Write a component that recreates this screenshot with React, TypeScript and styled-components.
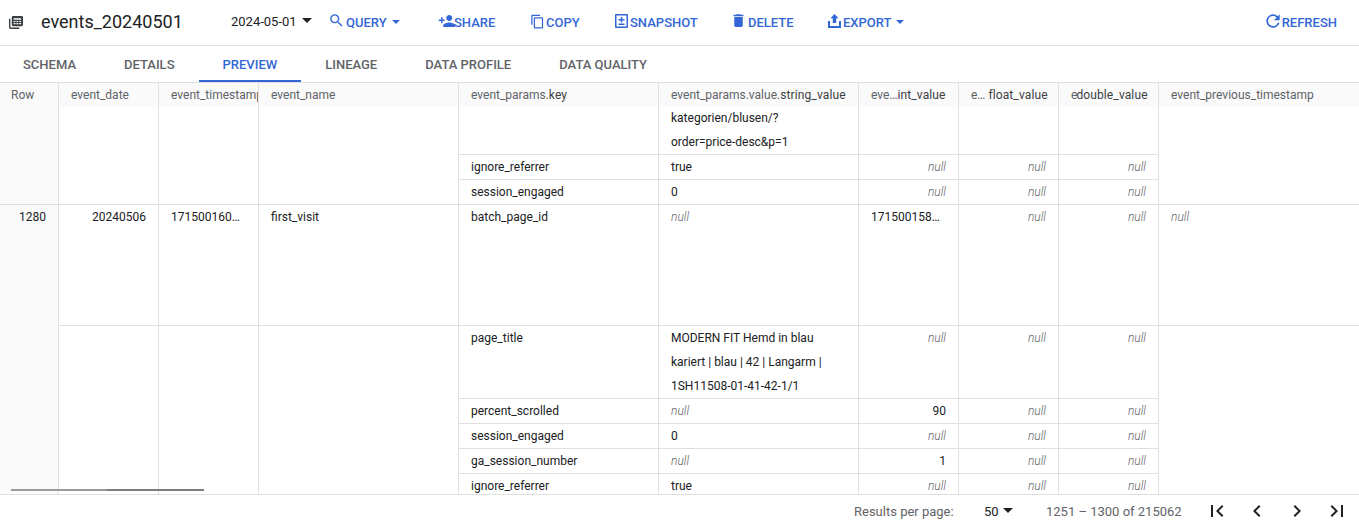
import React from 'react';
import styled, { createGlobalStyle } from 'styled-components';
import {
   MdChevronLeft,
   MdChevronRight,
   MdContentCopy,
   MdDelete,
   MdFirstPage,
   MdLastPage,
   MdPersonAdd,
   MdRefresh,
   MdSearch,
} from 'react-icons/md';

const GlobalStyle = createGlobalStyle`
   html, body {
      margin: 0;
      height: 100%;
      overflow: hidden;
      background: #fff;
      font-family: Roboto, "Liberation Sans", sans-serif;
   }
`;

const Root = styled.div`
   display: flex;
   flex-direction: column;
   width: 1359px;
   height: 525px;
   overflow: hidden;
`;

const Toolbar = styled.div`
   display: flex;
   align-items: center;
   flex: 0 0 46px;
   box-sizing: border-box;
   height: 46px;
   padding: 0 22px 2px 9px;
   border-bottom: 1px solid #e0e0e0;
`;

const Title = styled.div`
   font-size: 18px;
   color: #202124;
   margin: -1px 0 0 18px;
   width: 190px;
`;

const DatePicker = styled.div`
   display: flex;
   align-items: center;
   gap: 5px;
   font-size: 13px;
   color: #202124;
   width: 99px;
`;

const ToolButton = styled.div<{ $width?: number; $gap?: number }>`
   display: flex;
   align-items: center;
   gap: ${p => p.$gap ?? 2}px;
   width: ${p => (p.$width ? `${p.$width}px` : 'auto')};
   margin-top: 2px;
   font-size: 13px;
   font-weight: 500;
   color: #3367d6;
   white-space: nowrap;
   svg {
      flex: none;
   }
`;

const ButtonLabel = styled.span`
   display: inline-flex;
   align-items: center;
   gap: 5px;
`;

const Spacer = styled.div`
   flex: 1;
`;

const CaretDown = styled.span<{ $dark?: boolean }>`
   display: inline-block;
   width: 0;
   height: 0;
   margin-top: -2px;
   border-left: ${p => (p.$dark ? 5 : 4.5)}px solid transparent;
   border-right: ${p => (p.$dark ? 5 : 4.5)}px solid transparent;
   border-top: ${p => (p.$dark ? 5 : 4)}px solid ${p => (p.$dark ? '#202124' : '#3367d6')};
`;

const Tabs = styled.div`
   display: flex;
   flex: 0 0 36px;
   height: 36px;
   margin-left: -1px;
`;

const Tab = styled.div<{ $active?: boolean }>`
   display: flex;
   align-items: center;
   justify-content: center;
   box-sizing: border-box;
   height: 36px;
   padding: 2px 24px 0;
   font-size: 13px;
   font-weight: 500;
   color: ${p => (p.$active ? '#3367d6' : '#5f6368')};
   border-bottom: 2px solid ${p => (p.$active ? '#3367d6' : 'transparent')};
   white-space: nowrap;
`;

const TableArea = styled.div`
   position: relative;
   flex: 0 0 413px;
   height: 413px;
   overflow: hidden;
   box-sizing: border-box;
   border-top: 1px solid #e0e0e0;
   border-bottom: 1px solid #e0e0e0;
`;

const Grid = styled.table`
   table-layout: fixed;
   width: 1359px;
   border-collapse: separate;
   border-spacing: 0;
   font-size: 12px;
   color: #202124;
`;

const HeadCell = styled.th<{ $clip?: boolean; $last?: boolean }>`
   box-sizing: border-box;
   height: 24px;
   padding: 0 ${p => (p.$clip ? 0 : 12)}px 0 12px;
   background: #fafafa;
   border-right: ${p => (p.$last ? 'none' : '1px solid #e0e0e0')};
   font-weight: 400;
   text-align: left;
   color: #5f6368;
   white-space: nowrap;
   overflow: hidden;
   text-overflow: clip;
   b {
      font-weight: 400;
      color: #3c4043;
      letter-spacing: 0.12px;
   }
`;

const RowHeadCell = styled(HeadCell)`
   padding-left: 11px;
`;

const RowNumber = styled.td`
   box-sizing: border-box;
   padding: 0 12px;
   background: #fafafa;
   border-right: 1px solid #e0e0e0;
   border-bottom: 1px solid #e0e0e0;
   text-align: right;
   vertical-align: top;
   line-height: 24px;
`;

const Cell = styled.td<{ $right?: boolean; $wrap?: boolean; $last?: boolean }>`
   box-sizing: border-box;
   padding: 0 12px;
   border-right: ${p => (p.$last ? 'none' : '1px solid #e0e0e0')};
   border-bottom: 1px solid #e0e0e0;
   line-height: 24px;
   vertical-align: top;
   text-align: ${p => (p.$right ? 'right' : 'left')};
   white-space: ${p => (p.$wrap ? 'normal' : 'nowrap')};
   overflow: hidden;
   text-overflow: ellipsis;
`;

const ScrolledText = styled.div`
   margin-top: -1px;
`;

const Null = styled.span`
   font-style: italic;
   font-weight: 300;
   color: #5f6368;
`;

const ScrollThumb = styled.div`
   position: absolute;
   left: 11px;
   bottom: 3px;
   width: 193px;
   height: 2px;
   background: linear-gradient(to right, #999 0, #999 50%, #7f7f7a 50%, #7f7f7a 100%);
`;

const Footer = styled.div`
   display: flex;
   align-items: center;
   flex: 1;
   padding: 2px 0 0 854px;
   font-size: 13px;
   color: #5f6368;
`;

const FooterLabel = styled.div`
   flex: 0 0 130px;
`;

const PageSize = styled.div`
   display: flex;
   align-items: center;
   gap: 4px;
   flex: 0 0 62px;
   color: #202124;
`;

const RangeText = styled.div`
   flex: 0 0 151px;
`;

const PagerButton = styled.div`
   display: flex;
   align-items: center;
   justify-content: center;
   flex: 0 0 40px;
   color: #202124;
`;

const TableIcon = () => (
   <svg width="14" height="14" viewBox="0 0 15 15" fill="#3c4043">
      <path d="M0 4h1.5v9.5H11V15H1.5A1.5 1.5 0 0 1 0 13.5z" />
      <path
         fillRule="evenodd"
         d="M4.500 1H13.500A1.500 1.500 0 0 1 15 2.500V10.500A1.500 1.500 0 0 1 13.500 12H4.500A1.500 1.500 0 0 1 3 10.500V2.500A1.500 1.500 0 0 1 4.500 1zM5 3.500V5H13V3.500zM5 6.300V7.500H7V6.300zM8 6.300V7.500H10V6.300zM11 6.300V7.500H13V6.300zM5 8.700V10H7V8.700zM8 8.700V10H10V8.700zM11 8.700V10H13V8.700z"
      />
   </svg>
);

const SnapshotIcon = () => (
   <svg width="13" height="14" viewBox="0 0 13 14" fill="#3367d6" style={{ marginTop: -3 }}>
      <path
         fillRule="evenodd"
         d="M1 0H12A1 1 0 0 1 13 1V13A1 1 0 0 1 12 14H1A1 1 0 0 1 0 13V1A1 1 0 0 1 1 0zM1.500 1.500V12.500H11.500V1.500zM5.750 3H7.250V5H9.500V6.500H7.250V8.500H5.750V6.500H3.500V5H5.750zM3.500 9.500H9.500V11H3.500z"
      />
   </svg>
);

const ExportIcon = () => (
   <svg width="13" height="14" viewBox="0 0 13 14" fill="#3367d6" style={{ marginTop: -3 }}>
      <path d="M6.500 0L10.500 4.200H8.200V9H4.800V4.200H2.500z" />
      <path d="M0 7H2V12H11V7H13V14H0z" />
   </svg>
);

const nullCell = (
   <Cell $right>
      <Null>null</Null>
   </Cell>
);

type ParamRow = {
   key: string;
   value?: React.ReactNode;
   int?: string;
};

const ValueCell = ({ value }: { value?: React.ReactNode }) => (
   <Cell $wrap>{value ?? <Null>null</Null>}</Cell>
);

const IntCell = ({ value }: { value?: string }) => (value ? <Cell $right>{value}</Cell> : nullCell);

const laterParams: ParamRow[] = [
   { key: 'percent_scrolled', int: '90' },
   { key: 'session_engaged', value: '0' },
   { key: 'ga_session_number', int: '1' },
   { key: 'ignore_referrer', value: 'true' },
];

export default function App() {
   return (
      <Root>
         <GlobalStyle />
         <Toolbar>
            <TableIcon />
            <Title>events_20240501</Title>
            <DatePicker>
               2024-05-01
               <CaretDown $dark />
            </DatePicker>
            <ToolButton $width={108}>
               <MdSearch size={17} style={{ margin: '-4px -1px 0 -2px' }} />
               <ButtonLabel>
                  QUERY
                  <CaretDown />
               </ButtonLabel>
            </ToolButton>
            <ToolButton $width={93} $gap={0}>
               <MdPersonAdd size={18} style={{ margin: '-3px -2px 0 0' }} />
               SHARE
            </ToolButton>
            <ToolButton $width={84} $gap={1}>
               <MdContentCopy size={15} style={{ margin: '-3px 0 0 -1px' }} />
               COPY
            </ToolButton>
            <ToolButton $width={117}>
               <SnapshotIcon />
               SNAPSHOT
            </ToolButton>
            <ToolButton $width={96} $gap={3}>
               <MdDelete size={17} style={{ margin: '-4px -2px 0' }} />
               DELETE
            </ToolButton>
            <ToolButton>
               <ExportIcon />
               <ButtonLabel>
                  EXPORT
                  <CaretDown />
               </ButtonLabel>
            </ToolButton>
            <Spacer />
            <ToolButton $gap={0}>
               <MdRefresh size={20} style={{ margin: '-4px -1px 0 0' }} />
               REFRESH
            </ToolButton>
         </Toolbar>
         <Tabs>
            <Tab>SCHEMA</Tab>
            <Tab>DETAILS</Tab>
            <Tab $active>PREVIEW</Tab>
            <Tab>LINEAGE</Tab>
            <Tab>DATA PROFILE</Tab>
            <Tab>DATA QUALITY</Tab>
         </Tabs>
         <TableArea>
            <Grid>
               <colgroup>
                  <col width={59} />
                  <col width={100} />
                  <col width={100} />
                  <col width={200} />
                  <col width={200} />
                  <col width={200} />
                  <col width={100} />
                  <col width={100} />
                  <col width={100} />
                  <col width={200} />
               </colgroup>
               <thead>
                  <tr>
                     <RowHeadCell>Row</RowHeadCell>
                     <HeadCell>event_date</HeadCell>
                     <HeadCell $clip>event_timestamp</HeadCell>
                     <HeadCell>event_name</HeadCell>
                     <HeadCell>
                        event_params.<b>key</b>
                     </HeadCell>
                     <HeadCell>
                        event_params.value.<b>string_value</b>
                     </HeadCell>
                     <HeadCell>
                        eve…<b>int_value</b>
                     </HeadCell>
                     <HeadCell $clip>
                        e… <b>float_value</b>
                     </HeadCell>
                     <HeadCell $clip>
                        e<b style={{ marginLeft: -1 }}>double_value</b>
                     </HeadCell>
                     <HeadCell $last>event_previous_timestamp</HeadCell>
                  </tr>
               </thead>
               <tbody>
                  <tr>
                     <RowNumber rowSpan={3} />
                     <Cell rowSpan={3} />
                     <Cell rowSpan={3} />
                     <Cell rowSpan={3} />
                     <Cell />
                     <Cell $wrap>
                        <ScrolledText>
                           kategorien/blusen/?
                           <br />
                           order=price-desc&amp;p=1
                        </ScrolledText>
                     </Cell>
                     <Cell />
                     <Cell />
                     <Cell />
                     <Cell rowSpan={3} $last />
                  </tr>
                  <tr>
                     <Cell>ignore_referrer</Cell>
                     <Cell>true</Cell>
                     {nullCell}
                     {nullCell}
                     {nullCell}
                  </tr>
                  <tr>
                     <Cell>session_engaged</Cell>
                     <Cell>0</Cell>
                     {nullCell}
                     {nullCell}
                     {nullCell}
                  </tr>
                  <tr>
                     <RowNumber rowSpan={6}>1280</RowNumber>
                     <Cell $right style={{ height: 121 }}>
                        20240506
                     </Cell>
                     <Cell>171500160…</Cell>
                     <Cell>first_visit</Cell>
                     <Cell>batch_page_id</Cell>
                     <ValueCell />
                     <Cell>171500158…</Cell>
                     {nullCell}
                     {nullCell}
                     <Cell $last>
                        <Null>null</Null>
                     </Cell>
                  </tr>
                  <tr>
                     <Cell rowSpan={5} />
                     <Cell rowSpan={5} />
                     <Cell rowSpan={5} />
                     <Cell>page_title</Cell>
                     <Cell $wrap>
                        MODERN FIT Hemd in blau
                        <br />
                        kariert | blau | 42 | Langarm |
                        <br />
                        1SH11508-01-41-42-1/1
                     </Cell>
                     {nullCell}
                     {nullCell}
                     {nullCell}
                     <Cell rowSpan={5} $last />
                  </tr>
                  {laterParams.map(row => (
                     <tr key={row.key}>
                        <Cell>{row.key}</Cell>
                        <ValueCell value={row.value} />
                        <IntCell value={row.int} />
                        {nullCell}
                        {nullCell}
                     </tr>
                  ))}
               </tbody>
            </Grid>
            <ScrollThumb />
         </TableArea>
         <Footer>
            <FooterLabel>Results per page:</FooterLabel>
            <PageSize>
               50
               <CaretDown $dark />
            </PageSize>
            <RangeText>1251 – 1300 of 215062</RangeText>
            <PagerButton>
               <MdFirstPage size={24} />
            </PagerButton>
            <PagerButton>
               <MdChevronLeft size={24} />
            </PagerButton>
            <PagerButton>
               <MdChevronRight size={24} />
            </PagerButton>
            <PagerButton>
               <MdLastPage size={24} />
            </PagerButton>
         </Footer>
      </Root>
   );
}
